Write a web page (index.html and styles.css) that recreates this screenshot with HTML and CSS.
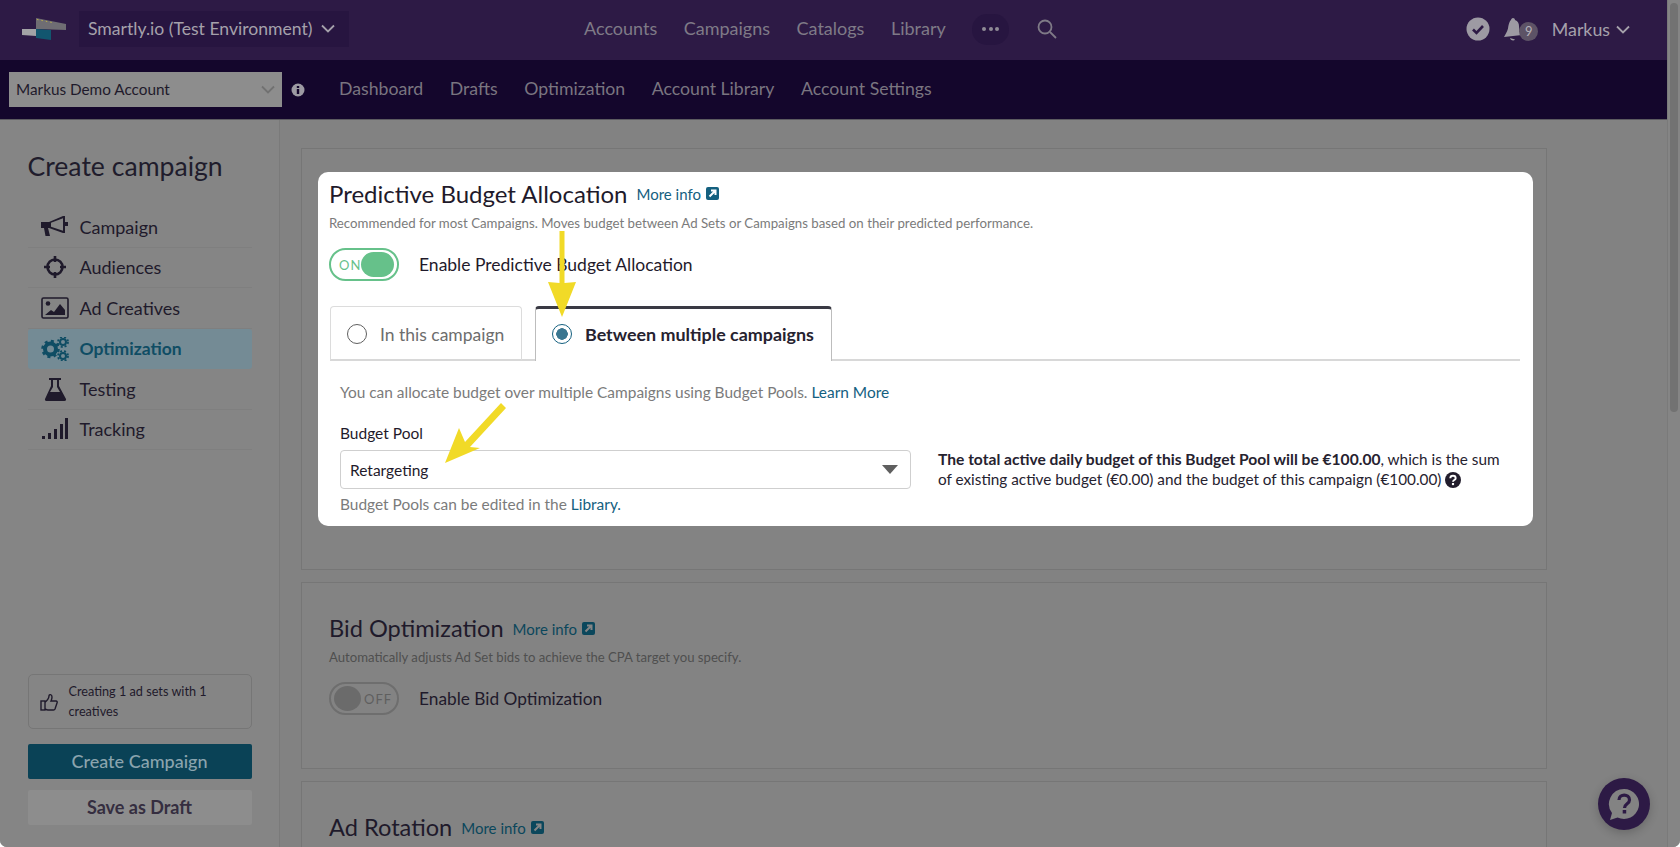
FILE: index.html
```html
<!DOCTYPE html>
<html lang="en">
<head>
  <meta charset="UTF-8" />
  <title>Create campaign - Smartly.io</title>
  <link rel="stylesheet" href="styles.css">
</head>
<body>

<div class="window">
  <div class="page">

    <header class="topbar">
      <svg class="logo" width="44" height="22" viewBox="0 0 44 22">
        <polygon points="14,0 44,6 44,12 14,11" fill="#6f6d73"/>
        <path d="M15 1.500l15 3" stroke="#b9ad4a" stroke-width="1" stroke-dasharray="1.500 3"/>
        <polygon points="0,11 14,11 14,18 0,17" fill="#a3a3a6"/>
        <polygon points="14,11 29,12 29,22 14,20" fill="#12566f"/>
      </svg>
      <div class="org-select">Smartly.io (Test Environment)
        <svg class="chev" width="14" height="9" viewBox="0 0 14 9"><path d="M1 1.500l6 6 6-6"/></svg>
      </div>
      <nav class="mainnav">
        <a href="#">Accounts</a>
        <a href="#">Campaigns</a>
        <a href="#">Catalogs</a>
        <a href="#">Library</a>
        <span class="more-pill"><i></i><i></i><i></i></span>
        <svg class="search" width="20" height="20" viewBox="0 0 20 20"><circle cx="8" cy="8" r="6.500"/><path d="M13 13l6 6"/></svg>
      </nav>
      <div class="usernav">
        <svg width="24" height="24" viewBox="0 0 24 24"><circle cx="12" cy="12" r="11.500" fill="#9d9aa3"/><path d="M7 12.500l3.500 3.500L17 9" fill="none" stroke="#2d1a45" stroke-width="2.600"/></svg>
        <span class="bell">
          <svg width="20" height="24" viewBox="0 0 20 24"><path d="M10 1c1 0 2 .8 2 2 3 1 4 3.500 4 6 0 4 1 6 3 9L1 20c1.500-3 3-5 4-8.500C5.500 8 6.500 4 8 3c0-1 1-2 2-2z" fill="#9d9aa3"/><path d="M7 21l5 1.500c-1 1.500-4 1.500-5-1.500z" fill="#9d9aa3"/></svg>
          <b class="badge">9</b>
        </span>
        <span class="username">Markus</span>
        <svg class="chev" width="14" height="9" viewBox="0 0 14 9"><path d="M1 1.500l6 6 6-6"/></svg>
      </div>
    </header>

    <div class="subbar">
      <div class="account-select"><span>Markus Demo Account</span>
        <svg class="chev-dim" width="14" height="9" viewBox="0 0 14 9"><path d="M1 1.500l6 6 6-6"/></svg>
      </div>
      <svg class="info" width="14" height="14" viewBox="0 0 14 14"><circle cx="7" cy="7" r="6.500" fill="#9d9aa3"/><rect x="5.800" y="6" width="2.400" height="5" fill="#14062c"/><rect x="5.800" y="3" width="2.400" height="2" fill="#14062c"/></svg>
      <nav class="subnav">
        <a href="#">Dashboard</a>
        <a href="#">Drafts</a>
        <a href="#">Optimization</a>
        <a href="#">Account Library</a>
        <a href="#">Account Settings</a>
      </nav>
    </div>

    <div class="content">
      <aside class="sidebar">
        <h2>Create campaign</h2>
        <ul class="steps">
          <li>
            <svg width="28" height="24" viewBox="0 0 28 24"><path d="M0 7h8L22 1h2v17h-2L8 13H7l2 8H4.500L3 13H0z" fill="#1f1a2b"/><path d="M10 7.800L22 3.200V15.800L10 11.800z" fill="#858585"/><rect x="24" y="7" width="3" height="4" fill="#1f1a2b"/></svg>
            Campaign
          </li>
          <li>
            <svg width="24" height="24" viewBox="0 0 24 24" fill="none" stroke="#1f1a2b" stroke-width="2.600"><circle cx="12" cy="12" r="7.500"/><path d="M12 1v6M12 17v6M1 12h6M17 12h6"/></svg>
            Audiences
          </li>
          <li>
            <svg width="28" height="22" viewBox="0 0 28 22"><rect x="1" y="1" width="26" height="20" rx="1.500" fill="none" stroke="#1f1a2b" stroke-width="1.600"/><circle cx="7" cy="6.500" r="2.300" fill="#1f1a2b"/><path d="M4 18l6-5 3 2 6-8 5 6v5z" fill="#1f1a2b"/></svg>
            Ad Creatives
          </li>
          <li class="active">
            <svg width="28" height="24" viewBox="0 0 28 24" fill="none" stroke="#0f4d64"><circle cx="9.500" cy="12" r="5.500" stroke-width="4"/><circle cx="9.500" cy="12" r="8" stroke-width="2.500" stroke-dasharray="3 3.300"/><circle cx="22" cy="5" r="3" stroke-width="2"/><circle cx="22" cy="5" r="5" stroke-width="1.800" stroke-dasharray="2 2"/><circle cx="22" cy="19" r="3" stroke-width="2"/><circle cx="22" cy="19" r="5" stroke-width="1.800" stroke-dasharray="2 2"/></svg>
            Optimization
          </li>
          <li>
            <svg width="24" height="24" viewBox="0 0 24 24"><path d="M6 1h12v2h-2v6l7 13c.3 1-.3 2-1.500 2H3.500C2.300 24 1.700 23 2 22l6-13V3H6z" fill="#1f1a2b"/><path d="M10 3h4v7l3 5H7l3-5z" fill="#858585"/></svg>
            Testing
          </li>
          <li>
            <svg width="26" height="22" viewBox="0 0 26 22" fill="#1f1a2b"><rect x="0" y="18" width="3" height="3"/><rect x="6" y="15" width="3" height="6"/><rect x="12" y="11" width="3" height="10"/><rect x="18" y="6" width="3" height="15"/><rect x="23" y="0" width="3" height="21"/></svg>
            Tracking
          </li>
        </ul>

        <div class="sidebar-foot">
          <div class="summary">
            <svg width="18" height="18" viewBox="0 0 18 18" fill="none" stroke="#1f1a2b" stroke-width="1.400"><rect x="1" y="8" width="4" height="9"/><path d="M5 9c2-1 4-4 4-6 0-2 3-2 3 1 0 1-.5 3-1 4h5c1 0 1.500 1 1 2l-2 6c-.3.700-1 1-1.500 1H8c-1 0-2-.5-3-1"/></svg>
            <span>Creating 1 ad sets with 1 creatives</span>
          </div>
          <button class="btn-primary" type="button">Create Campaign</button>
          <button class="btn-draft" type="button">Save as Draft</button>
        </div>
      </aside>

      <main class="main">
        <section class="panel panel-budget">
          <div class="spotlight">
            <div class="panel-title">
              <h3>Predictive Budget Allocation</h3>
              <a class="more-info" href="#">More info
                <svg width="13" height="13" viewBox="0 0 13 13"><rect width="13" height="13" rx="2" fill="#14607f"/><path d="M3.500 9.500L9 4M5 3.500h4.500V8" fill="none" stroke="#fff" stroke-width="2"/></svg>
              </a>
            </div>
            <p class="hint">Recommended for most Campaigns. Moves budget between Ad Sets or Campaigns based on their predicted performance.</p>
            <div class="toggle-row">
              <span class="toggle on"><em>ON</em><i></i></span>
              <span>Enable Predictive Budget Allocation</span>
            </div>
            <div class="tabs">
              <div class="tab"><span class="radio"></span>In this campaign</div>
              <div class="tab selected"><span class="radio checked"></span>Between multiple campaigns</div>
            </div>
            <div class="tab-body">
              <p class="muted">You can allocate budget over multiple Campaigns using Budget Pools. <a href="#">Learn More</a></p>
              <div class="pool-row">
                <div class="pool-field">
                  <label>Budget Pool</label>
                  <div class="pool-select">Retargeting<span class="caret"></span></div>
                  <p class="muted">Budget Pools can be edited in the <a href="#">Library.</a></p>
                </div>
                <p class="pool-note"><b>The total active daily budget of this Budget Pool will be €100.00</b>, which is the sum of existing active budget (€0.00) and the budget of this campaign (€100.00)
                  <svg width="16" height="16" viewBox="0 0 15 15"><circle cx="7.500" cy="7.500" r="7.500" fill="#221d2c"/><path d="M5 5.800c0-3 5-3 5 0 0 1.800-2.500 1.700-2.500 3.400" fill="none" stroke="#fff" stroke-width="1.800"/><rect x="6.500" y="10.300" width="2" height="2" fill="#fff"/></svg>
                </p>
              </div>
            </div>
          </div>
        </section>

        <section class="panel panel-bid">
          <div class="panel-title">
            <h3>Bid Optimization</h3>
            <a class="more-info" href="#">More info
              <svg width="13" height="13" viewBox="0 0 13 13"><rect width="13" height="13" rx="2" fill="#0b475c"/><path d="M3.500 9.500L9 4M5 3.500h4.500V8" fill="none" stroke="#858585" stroke-width="2"/></svg>
            </a>
          </div>
          <p class="hint">Automatically adjusts Ad Set bids to achieve the CPA target you specify.</p>
          <div class="toggle-row">
            <span class="toggle off"><i></i><em>OFF</em></span>
            <span>Enable Bid Optimization</span>
          </div>
        </section>

        <section class="panel panel-rotation">
          <div class="panel-title">
            <h3>Ad Rotation</h3>
            <a class="more-info" href="#">More info
              <svg width="13" height="13" viewBox="0 0 13 13"><rect width="13" height="13" rx="2" fill="#0b475c"/><path d="M3.500 9.500L9 4M5 3.500h4.500V8" fill="none" stroke="#858585" stroke-width="2"/></svg>
            </a>
          </div>
        </section>
      </main>
    </div>
  </div>

  <div class="scrollbar"><div class="thumb"></div></div>
</div>

<!-- yellow callout arrows -->
<svg class="arrows" width="1680" height="847" viewBox="0 0 1680 847">
  <polygon points="559.500,231 564.500,231 564.500,283 576,282 562,317 548,282 559.500,283" fill="#f1da27"/>
  <polygon points="501,403 506,408 470,447 480,448 445,463 459,428 465,442" fill="#f1da27"/>
</svg>

<div class="help-bubble">
  <svg width="34" height="34" viewBox="0 0 34 34"><path d="M17 2a15 15 0 1 1-6.500 28.500L3 33l2-7A15 15 0 0 1 17 2z" fill="#838383"/><path d="M12 13c0-6.500 10.500-6.500 10.500 0 0 4-5 3.500-5 8" fill="none" stroke="#2d1a45" stroke-width="3.200"/><rect x="15.700" y="23" width="3.500" height="3.500" fill="#2d1a45"/></svg>
</div>

</body>
</html>
```

FILE: styles.css
```css
* {
  box-sizing: border-box;
  margin: 0;
  padding: 0;
}

body {
  font-family: 'Lato', sans-serif;
  background: #fff;
  color: #1f1a2b;
  overflow: hidden;
  height: 847px;
}

a {
  text-decoration: none;
}

.window {
  display: flex;
  height: 847px;
  position: relative;
  overflow: hidden;
  border-radius: 0 0 7px 7px;
  background: #828282;
}

.page {
  flex: 1;
  display: flex;
  flex-direction: column;
  min-width: 0;
}

/* top bar */
.topbar {
  height: 60px;
  background: #2d1a45;
  display: flex;
  align-items: center;
  padding: 0 0 2px 22px;
  font-size: 17.800px;
  color: #a5a1ab;
}

.org-select {
  margin-left: 13px;
  width: 270px;
  height: 36px;
  background: #271540;
  display: flex;
  align-items: center;
  gap: 8px;
  padding: 0 14px 2px 9px;
  font-size: 17.600px;
  white-space: nowrap;
}

.chev path {
  fill: none;
  stroke: #a5a1ab;
  stroke-width: 1.800;
}

.mainnav {
  margin-left: 235px;
  display: flex;
  align-items: center;
  gap: 26.500px;
  color: #7f7a87;
  font-size: 18px;
}

.mainnav a {
  color: #7f7a87;
  padding-bottom: 2px;
}

.more-pill {
  width: 37px;
  height: 31px;
  border-radius: 15px;
  background: #271540;
  display: flex;
  align-items: center;
  justify-content: center;
  gap: 2.500px;
  margin-right: 1px;
}

.more-pill i {
  width: 4px;
  height: 4px;
  border-radius: 50%;
  background: #8f8b95;
}

.search circle,
.search path {
  fill: none;
  stroke: #7f7a87;
  stroke-width: 1.800;
}

.usernav {
  margin-left: auto;
  margin-right: 37px;
  display: flex;
  align-items: center;
}

.bell {
  display: flex;
  align-items: center;
  margin-left: 13px;
}

.badge {
  width: 19px;
  height: 19px;
  margin-left: -4px;
  margin-top: 4px;
  border-radius: 50%;
  background: #5d5366;
  color: #b5b1ba;
  font-size: 13px;
  font-weight: 400;
  display: flex;
  align-items: center;
  justify-content: center;
}

.username {
  margin: 0 6px 0 13.500px;
  padding-bottom: 1px;
}

/* second bar */
.subbar {
  height: 60px;
  background: #14062c;
  border-bottom: 1px solid #5c5a60;
  display: flex;
  align-items: center;
  padding-left: 9px;
}

.account-select {
  width: 273px;
  height: 35px;
  background: #8d8d8d;
  color: #1f1a2b;
  font-size: 15.300px;
  display: flex;
  align-items: center;
  justify-content: space-between;
  padding: 0 7px;
}

.account-select span {
  padding-bottom: 2px;
}

.chev-dim path {
  fill: none;
  stroke: #717171;
  stroke-width: 1.800;
}

.info {
  margin-left: 9px;
}

.subnav {
  margin-left: 34px;
  display: flex;
  gap: 26.500px;
  font-size: 17.700px;
}

.subnav a {
  color: #7a7580;
  padding-bottom: 3px;
}

/* layout below the bars */
.content {
  flex: 1;
  display: flex;
  min-height: 0;
}

.sidebar {
  width: 280px;
  background: #858585;
  border-right: 1px solid #7a7a7a;
  padding: 30px 27px 22px 27.500px;
  display: flex;
  flex-direction: column;
}

.sidebar h2 {
  font-size: 26.600px;
  font-weight: 400;
  line-height: 32px;
  color: #201c2c;
}

.steps {
  list-style: none;
  margin-top: 25px;
  font-size: 18px;
}

.steps li {
  height: 40.500px;
  display: flex;
  align-items: center;
  gap: 11px;
  padding-left: 13px;
  border-bottom: 1px solid #7f7f7f;
  width: 224px;
}

.steps li svg {
  width: 28px;
  flex: none;
}

.steps li.active {
  background: #748b95;
  color: #0f4d64;
  font-weight: 700;
  font-size: 17.500px;
  border-radius: 3px;
  border-bottom: none;
}

.sidebar-foot {
  margin-top: auto;
}

.summary {
  width: 224px;
  height: 55px;
  border: 1px solid #767676;
  border-radius: 5px;
  display: flex;
  align-items: center;
  gap: 11px;
  padding: 0 10px 0 11px;
  font-size: 12.700px;
  line-height: 19.500px;
}

.summary svg {
  flex: none;
}

.btn-primary,
.btn-draft {
  display: block;
  width: 224px;
  height: 35px;
  border: none;
  border-radius: 2px;
  font-family: inherit;
  font-size: 18px;
  font-weight: 500;
  padding-bottom: 2px;
}

.btn-primary {
  margin-top: 15px;
  background: #0a4256;
  color: #8aa4ae;
}

.btn-draft {
  margin-top: 11px;
  background: #8d8d8d;
  color: #352e40;
  font-weight: 700;
}

/* main column */
.main {
  flex: 1;
  padding: 28px 120px 0 21px;
  overflow: hidden;
  min-width: 0;
}

.panel {
  border: 1px solid #767676;
  background: #838383;
  margin-bottom: 12px;
}

.panel-budget {
  height: 422px;
  padding: 23px 13px 0 16px;
}

.panel-bid {
  height: 187px;
  padding: 31px 27px 0;
}

.panel-rotation {
  height: 120px;
  padding: 31px 27px 0;
}

.spotlight {
  background: #fff;
  border-radius: 10px;
  height: 354px;
  padding: 7px 13px 0 11px;
}

.panel-title {
  display: flex;
  align-items: center;
  gap: 9px;
  height: 28px;
}

.panel-title h3 {
  font-size: 24px;
  font-weight: 400;
  white-space: nowrap;
}

.panel-bid h3,
.panel-rotation h3 {
  font-size: 23.600px;
}

.more-info {
  color: #14607f;
  font-size: 15px;
  display: flex;
  align-items: center;
  gap: 5px;
  padding-top: 1px;
}

.panel-bid .more-info,
.panel-rotation .more-info {
  color: #0b475c;
}

.hint {
  font-size: 13.250px;
  line-height: 16px;
  margin-top: 8px;
  color: #7b7b7b;
}

.panel-bid .hint {
  color: #4f4f4f;
  margin-top: 7px;
  font-size: 13.150px;
}

.toggle-row {
  display: flex;
  align-items: center;
  gap: 20px;
  margin-top: 17px;
  font-size: 17.500px;
}

.panel-bid .toggle-row {
  font-size: 17.300px;
}

.toggle {
  width: 70px;
  height: 33px;
  border-radius: 17px;
  display: flex;
  align-items: center;
  padding: 0 3px;
  font-size: 13px;
  letter-spacing: 1px;
}

.toggle em {
  font-style: normal;
}

.toggle i {
  display: block;
  border-radius: 14px;
  height: 25px;
}

.toggle.on {
  border: 2px solid #66c18a;
  color: #66c18a;
  justify-content: space-between;
  padding-left: 8px;
}

.toggle.on i {
  width: 36px;
  background: #66c18a;
}

.toggle.off {
  border: 2px solid #6e6e6e;
  color: #5f5f5f;
  gap: 3px;
}

.toggle.off i {
  width: 27px;
  background: #6b6b6b;
  border-radius: 50%;
}

.tabs {
  display: flex;
  gap: 13px;
  margin-top: 25px;
  height: 55px;
  border-bottom: 2px solid #d8d8d8;
  font-size: 17.500px;
  margin-left: 1px;
}

.tab {
  width: 192px;
  height: 54px;
  border: 1px solid #dcdcdc;
  border-bottom: none;
  border-radius: 4px 4px 0 0;
  display: flex;
  align-items: center;
  gap: 13px;
  padding: 1px 0 0 16px;
  color: #6d6d6d;
}

.tab.selected {
  width: 297px;
  height: 55px;
  border-color: #bdbdbd;
  border-top: 3px solid #3a3a44;
  background: #fff;
  color: #26222f;
  font-weight: 700;
  font-size: 17.900px;
  padding: 0 0 3px 16px;
}

.radio {
  width: 20px;
  height: 20px;
  border: 1px solid #5f5f5f;
  border-radius: 50%;
  flex: none;
}

.radio.checked {
  border-color: #14607f;
  background: radial-gradient(circle, #3a7690 0 5.500px, #fff 6px);
}

.tab-body {
  padding: 21px 0 0 11px;
}

.muted {
  font-size: 15.450px;
  color: #7b7b7b;
  line-height: 20px;
}

.muted a {
  color: #14607f;
}

.pool-row {
  display: flex;
  gap: 27px;
  margin-top: 21px;
}

.pool-field {
  width: 571px;
  flex: none;
}

.pool-field label {
  display: block;
  font-size: 15.500px;
  line-height: 20px;
}

.pool-select {
  margin-top: 7px;
  height: 39px;
  border: 1px solid #cfcfcf;
  border-radius: 4px;
  font-size: 15.500px;
  display: flex;
  align-items: center;
  justify-content: space-between;
  padding: 0 12px 0 9px;
}

.caret {
  width: 0;
  height: 0;
  border-left: 8.500px solid transparent;
  border-right: 8.500px solid transparent;
  border-top: 9px solid #5f5f5f;
}

.pool-field .muted {
  margin-top: 5px;
}

.pool-note {
  margin-top: 26px;
  font-size: 15.300px;
  line-height: 20px;
  color: #26222f;
  max-width: 568px;
}

.pool-note b {
  font-size: 15.600px;
}

.pool-note svg {
  vertical-align: -3px;
}

/* fake browser scrollbar */
.scrollbar {
  width: 13px;
  background: #858585;
  border-left: 1px solid #7a7a7a;
  padding: 3px 2px;
}

.thumb {
  height: 409px;
  border-radius: 5px;
  background: #727272;
}

.arrows {
  position: absolute;
  left: 0;
  top: 0;
  pointer-events: none;
}

.help-bubble {
  position: absolute;
  left: 1598px;
  top: 778px;
  width: 52px;
  height: 52px;
  border-radius: 50%;
  background: #2d1a45;
  box-shadow: 0 3px 10px rgba(0,0,0,0.2);
  display: flex;
  align-items: center;
  justify-content: center;
}
```
